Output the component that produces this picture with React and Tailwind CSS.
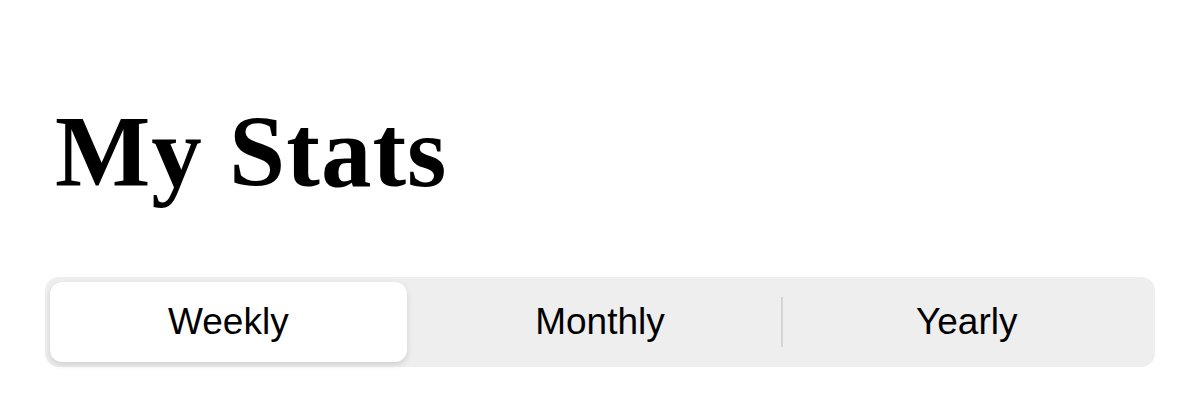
export default function App() {
  const tabs = ["Weekly", "Monthly", "Yearly"];
  return (
    <div className="w-[1200px] h-[407px] bg-white px-[45px] pt-[92px]">
      <h1
        className="text-[101px] font-bold leading-[120px] tracking-[1px] text-black pl-[10px]"
        style={{ fontFamily: '"Liberation Serif", serif' }}
      >
        My Stats
      </h1>
      <div
        className="mt-[65px] h-[90px] rounded-[14px] bg-[#eeeeee] p-[5px] flex items-stretch"
        style={{ fontFamily: '"Liberation Sans", Arial, sans-serif' }}
      >
        {tabs.map((t, i) => (
          <div key={t} className="flex-1 flex items-center relative">
            {i === 2 && <div className="w-[2px] h-[50px] bg-[#d4d4d4] absolute left-[-2px]" />}
            <div
              className={
                i === 0
                  ? "flex-1 h-full mr-[10px] rounded-[12px] bg-white shadow-[0_3px_6px_rgba(0,0,0,0.12),0_0_1px_rgba(0,0,0,0.06)] flex items-center justify-center text-[37px] text-black"
                  : "flex-1 h-full flex items-center justify-center text-[37px] text-black"
              }
            >
              {t}
            </div>
          </div>
        ))}
      </div>
    </div>
  );
}
